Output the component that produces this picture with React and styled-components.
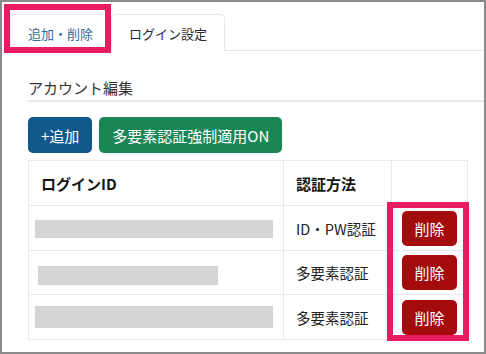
import React from "react";
import styled, { createGlobalStyle } from "styled-components";

const Global = createGlobalStyle`
  html, body { margin: 0; padding: 0; background: #fff; }
  body { width: 486px; height: 354px; overflow: hidden; font-family: "Noto Sans CJK JP", "Noto Sans", sans-serif; }
`;

const Stage = styled.div`
  position: relative;
  width: 486px;
  height: 354px;
`;

const Frame = styled.div`
  box-sizing: border-box;
  width: 486px;
  height: 354px;
  border: 2px solid #8a8a8a;
  background: #fff;
  display: flex;
  flex-direction: column;
  overflow: hidden;
`;

const TabNav = styled.div`
  display: flex;
  margin-top: 12px;
  padding-left: 8px;
  border-bottom: 1px solid #e3e6ea;
`;

const Tab = styled.div`
  box-sizing: border-box;
  height: 37px;
  padding: 0 17px;
  display: flex;
  align-items: center;
  font-size: 13px;
  color: ${(p) => (p.$active ? "#2f6b9c" : "#2b2b2b")};
  border: 1px solid #e6e8eb;
  border-bottom: none;
  border-radius: 5px 5px 0 0;
  background: #fff;
  margin-bottom: -1px;
`;

const Content = styled.div`
  padding-left: 26px;
  display: flex;
  flex-direction: column;
`;

const Heading = styled.div`
  margin-top: 26px;
  font-size: 15px;
  line-height: 22px;
  color: #333;
  padding-bottom: 1px;
  border-bottom: 2px solid #e4e7eb;
`;

const Toolbar = styled.div`
  display: flex;
  gap: 7px;
  margin-top: 15px;
`;

const Button = styled.button`
  box-sizing: border-box;
  height: ${(p) => (p.$small ? "35px" : "36px")};
  padding: 0 ${(p) => (p.$small ? "12px" : "13px")};
  border: none;
  border-radius: 5px;
  font-family: inherit;
  font-size: 15px;
  color: #fff;
  background: ${(p) => p.$bg};
  display: inline-flex;
  align-items: center;
`;

const Table = styled.table`
  margin-top: 7px;
  width: 439px;
  border-collapse: collapse;
  table-layout: fixed;
  border: 1px solid #e8eaed;
`;

const Th = styled.th`
  height: 44px;
  padding: 0 12px;
  text-align: left;
  font-size: 15px;
  font-weight: 700;
  color: #151515;
  border: 1px solid #e8eaed;
`;

const Td = styled.td`
  height: ${(p) => p.$h || 43}px;
  padding: ${(p) => (p.$pad != null ? p.$pad : "0 12px")};
  font-size: 14.5px;
  color: #222;
  border: 1px solid #e8eaed;
  vertical-align: middle;
  text-align: ${(p) => p.$align || "left"};
`;

const Redacted = styled.div`
  width: ${(p) => p.$w}px;
  height: ${(p) => p.$h}px;
  margin-left: ${(p) => p.$x || 0}px;
  margin-top: ${(p) => p.$y || 0}px;
  background: #d3d4d6;
`;

const Annot = styled.div`
  position: absolute;
  box-sizing: border-box;
  left: ${(p) => p.$x}px;
  top: ${(p) => p.$y}px;
  width: ${(p) => p.$w}px;
  height: ${(p) => p.$h}px;
  border: 6px solid #e91c62;
  pointer-events: none;
`;

const rows = [
  { bar: { w: 238, h: 18, x: 0, y: 2 }, method: "ID・PW認証", h: 44 },
  { bar: { w: 180, h: 19, x: 3, y: 6 }, method: "多要素認証", h: 43 },
  { bar: { w: 238, h: 22, x: 0, y: 0 }, method: "多要素認証", h: 44 },
];

export default function App() {
  return (
    <>
      <Global />
      <Stage>
        <Frame>
          <TabNav>
            <Tab $active>追加・削除</Tab>
            <Tab>ログイン設定</Tab>
          </TabNav>
          <Content>
            <Heading>アカウント編集</Heading>
            <Toolbar>
              <Button $bg="#11598b">+追加</Button>
              <Button $bg="#1a8655">多要素認証強制適用ON</Button>
            </Toolbar>
            <Table>
              <colgroup>
                <col style={{ width: 255 }} />
                <col style={{ width: 108 }} />
                <col style={{ width: 76 }} />
              </colgroup>
              <thead>
                <tr>
                  <Th>ログインID</Th>
                  <Th>認証方法</Th>
                  <Th />
                </tr>
              </thead>
              <tbody>
                {rows.map((r, i) => (
                  <tr key={i}>
                    <Td $h={r.h} $pad="0 6px">
                      <Redacted $w={r.bar.w} $h={r.bar.h} $x={r.bar.x} $y={r.bar.y} />
                    </Td>
                    <Td $h={r.h}>{r.method}</Td>
                    <Td $h={r.h} $pad="0" $align="center">
                      <Button $small $bg="#a30b0d">削除</Button>
                    </Td>
                  </tr>
                ))}
              </tbody>
            </Table>
          </Content>
        </Frame>
        <Annot $x={4} $y={4} $w={107} $h={49} />
        <Annot $x={387} $y={202} $w={82} $h={139} />
      </Stage>
    </>
  );
}
